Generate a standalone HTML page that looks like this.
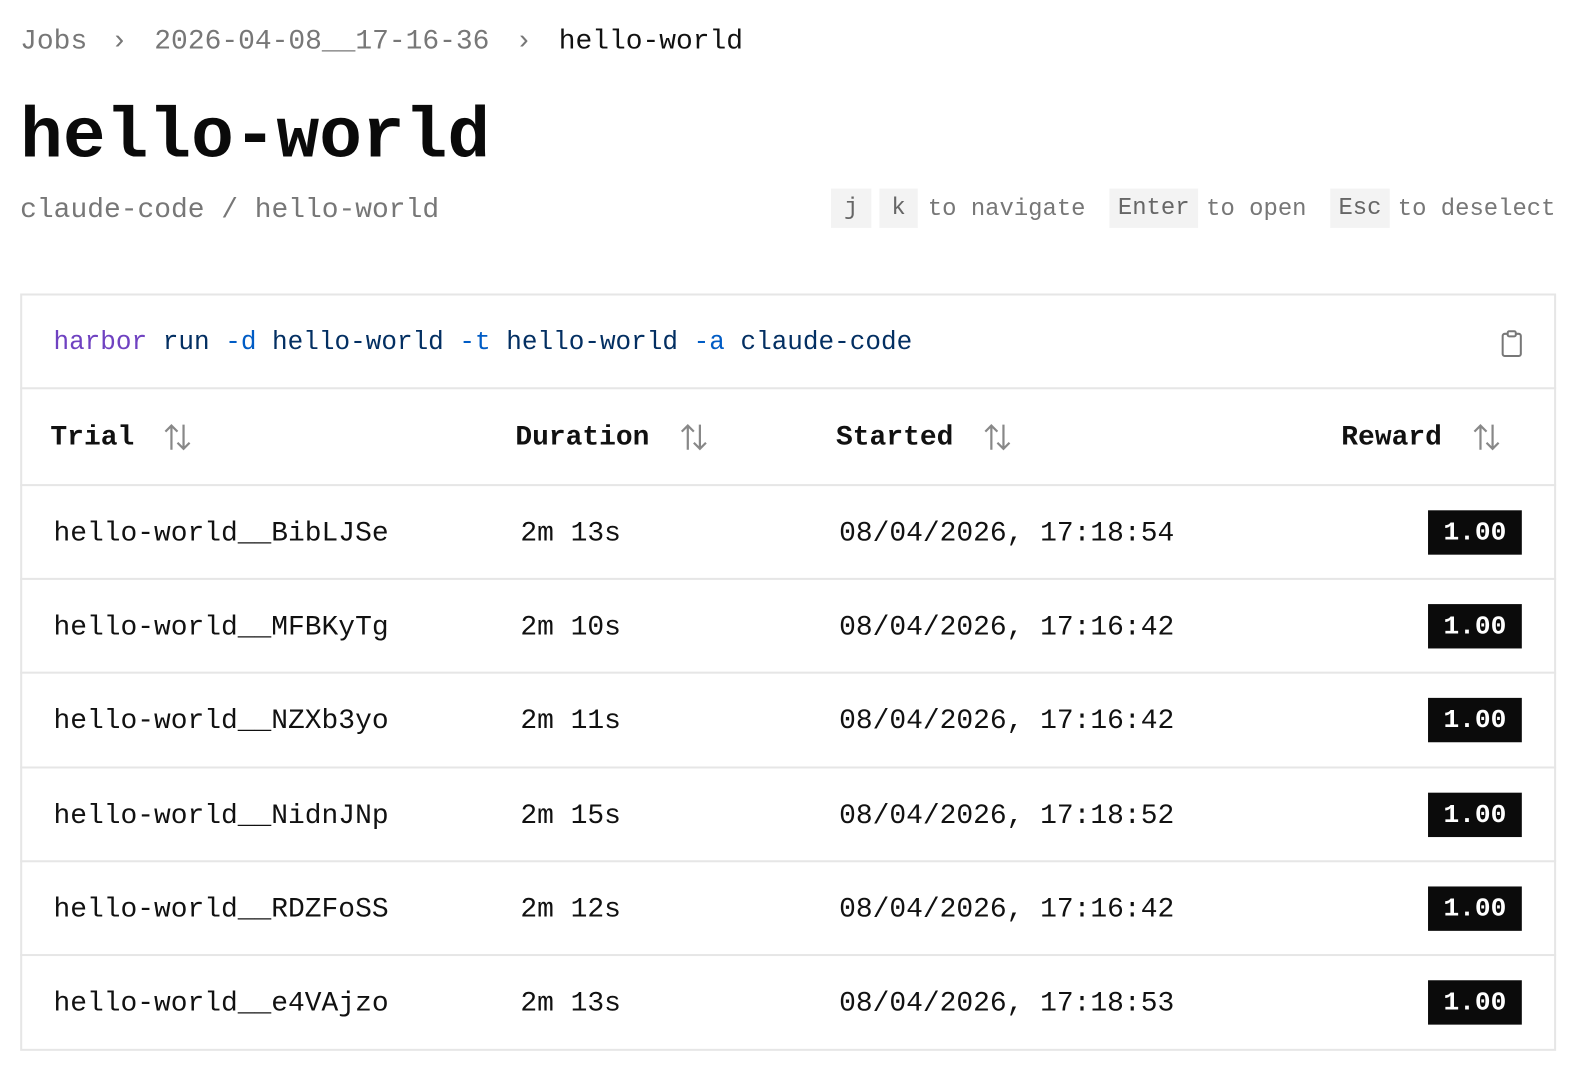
<!DOCTYPE html>
<html><head><meta charset="utf-8"><style>
*{margin:0;padding:0;box-sizing:border-box}
body{width:1580px;height:1072px;background:#fff;overflow:hidden}
#w{position:absolute;left:0;top:0;width:1580px;height:1072px;transform:scale(1.0085);transform-origin:0 0;font-family:"Liberation Mono",monospace;font-size:27.7px;color:#111}
.a{position:absolute;white-space:pre;line-height:1}
.g{color:#777}
.h{font-size:23.7px}
.kbd{position:absolute;background:#f3f3f3;top:187px;height:39px;line-height:40px;text-align:center;color:#666;font-size:23.7px}
.box{position:absolute;left:20px;top:291px;width:1523px;height:751px;border:2px solid #e6e6e6}
.hl{position:absolute;left:20px;width:1523px;height:2px;background:#e6e6e6}
.th{font-weight:bold;color:#111}
.badge{position:absolute;left:1416px;width:93px;height:44px;background:#0b0b0b;color:#fff;font-weight:bold;text-align:center;line-height:44px;font-size:26px}
.so{position:absolute;top:420px}
</style></head><body><div id="w">
<div class="a g" style="left:20px;top:28px">Jobs</div>
<div class="a g" style="left:110px;top:28px">›</div>
<div class="a g" style="left:153px;top:28px">2026-04-08__17-16-36</div>
<div class="a g" style="left:511px;top:28px">›</div>
<div class="a" style="left:554px;top:28px">hello-world</div>
<div class="a" style="left:20px;top:102px;font-size:70.6px;font-weight:bold;color:#0a0a0a">hello-world</div>
<div class="a g" style="left:20px;top:195px">claude-code / hello-world</div>
<div class="kbd" style="left:824px;width:40px">j</div>
<div class="kbd" style="left:872px;width:38px">k</div>
<div class="a g h" style="left:920px;top:196px">to navigate</div>
<div class="kbd" style="left:1100px;width:88px">Enter</div>
<div class="a g h" style="left:1196px;top:196px">to open</div>
<div class="kbd" style="left:1319px;width:59px">Esc</div>
<div class="a g h" style="left:1386px;top:196px">to deselect</div>
<div class="box"></div>
<div class="a" style="left:53px;top:327px;font-size:25.8px"><span style="color:#6f42c1">harbor</span> <span style="color:#032f62">run</span> <span style="color:#005cc5">-d</span> <span style="color:#032f62">hello-world</span> <span style="color:#005cc5">-t</span> <span style="color:#032f62">hello-world</span> <span style="color:#005cc5">-a</span> <span style="color:#032f62">claude-code</span></div>
<svg style="position:absolute;left:1487px;top:327px" width="24" height="28" viewBox="0 0 24 28"><rect x="3" y="4" width="18" height="22" rx="2" fill="none" stroke="#777" stroke-width="2"/><rect x="8" y="1.5" width="8" height="5" rx="1.5" fill="#fff" stroke="#777" stroke-width="2"/></svg>
<div class="hl" style="top:384px"></div>
<div class="a th" style="left:50px;top:421px">Trial</div>
<div class="a th" style="left:511px;top:421px">Duration</div>
<div class="a th" style="left:829px;top:421px">Started</div>
<div class="a th" style="left:1330px;top:421px">Reward</div>
<svg class="so" style="left:162px" width="28" height="27" viewBox="0 0 28 27"><path d="M8 26V2M2 8L8 2L14 8M20 1V25M14 19L20 25L26 19" fill="none" stroke="#888" stroke-width="2.2"/></svg>
<svg class="so" style="left:674px" width="28" height="27" viewBox="0 0 28 27"><path d="M8 26V2M2 8L8 2L14 8M20 1V25M14 19L20 25L26 19" fill="none" stroke="#888" stroke-width="2.2"/></svg>
<svg class="so" style="left:975px" width="28" height="27" viewBox="0 0 28 27"><path d="M8 26V2M2 8L8 2L14 8M20 1V25M14 19L20 25L26 19" fill="none" stroke="#888" stroke-width="2.2"/></svg>
<svg class="so" style="left:1460px" width="28" height="27" viewBox="0 0 28 27"><path d="M8 26V2M2 8L8 2L14 8M20 1V25M14 19L20 25L26 19" fill="none" stroke="#888" stroke-width="2.2"/></svg>
<div class="hl" style="top:480px"></div>
<div class="hl" style="top:573px"></div>
<div class="hl" style="top:666px"></div>
<div class="hl" style="top:760px"></div>
<div class="hl" style="top:853px"></div>
<div class="hl" style="top:946px"></div>

<div class="a" style="left:53px;top:516px">hello-world__BibLJSe</div><div class="a" style="left:516px;top:516px">2m 13s</div><div class="a" style="left:832px;top:516px">08/04/2026, 17:18:54</div><div class="badge" style="top:506px">1.00</div>
<div class="a" style="left:53px;top:609px">hello-world__MFBKyTg</div><div class="a" style="left:516px;top:609px">2m 10s</div><div class="a" style="left:832px;top:609px">08/04/2026, 17:16:42</div><div class="badge" style="top:599px">1.00</div>
<div class="a" style="left:53px;top:702px">hello-world__NZXb3yo</div><div class="a" style="left:516px;top:702px">2m 11s</div><div class="a" style="left:832px;top:702px">08/04/2026, 17:16:42</div><div class="badge" style="top:692px">1.00</div>
<div class="a" style="left:53px;top:796px">hello-world__NidnJNp</div><div class="a" style="left:516px;top:796px">2m 15s</div><div class="a" style="left:832px;top:796px">08/04/2026, 17:18:52</div><div class="badge" style="top:786px">1.00</div>
<div class="a" style="left:53px;top:889px">hello-world__RDZFoSS</div><div class="a" style="left:516px;top:889px">2m 12s</div><div class="a" style="left:832px;top:889px">08/04/2026, 17:16:42</div><div class="badge" style="top:879px">1.00</div>
<div class="a" style="left:53px;top:982px">hello-world__e4VAjzo</div><div class="a" style="left:516px;top:982px">2m 13s</div><div class="a" style="left:832px;top:982px">08/04/2026, 17:18:53</div><div class="badge" style="top:972px">1.00</div>
</div></body></html>
